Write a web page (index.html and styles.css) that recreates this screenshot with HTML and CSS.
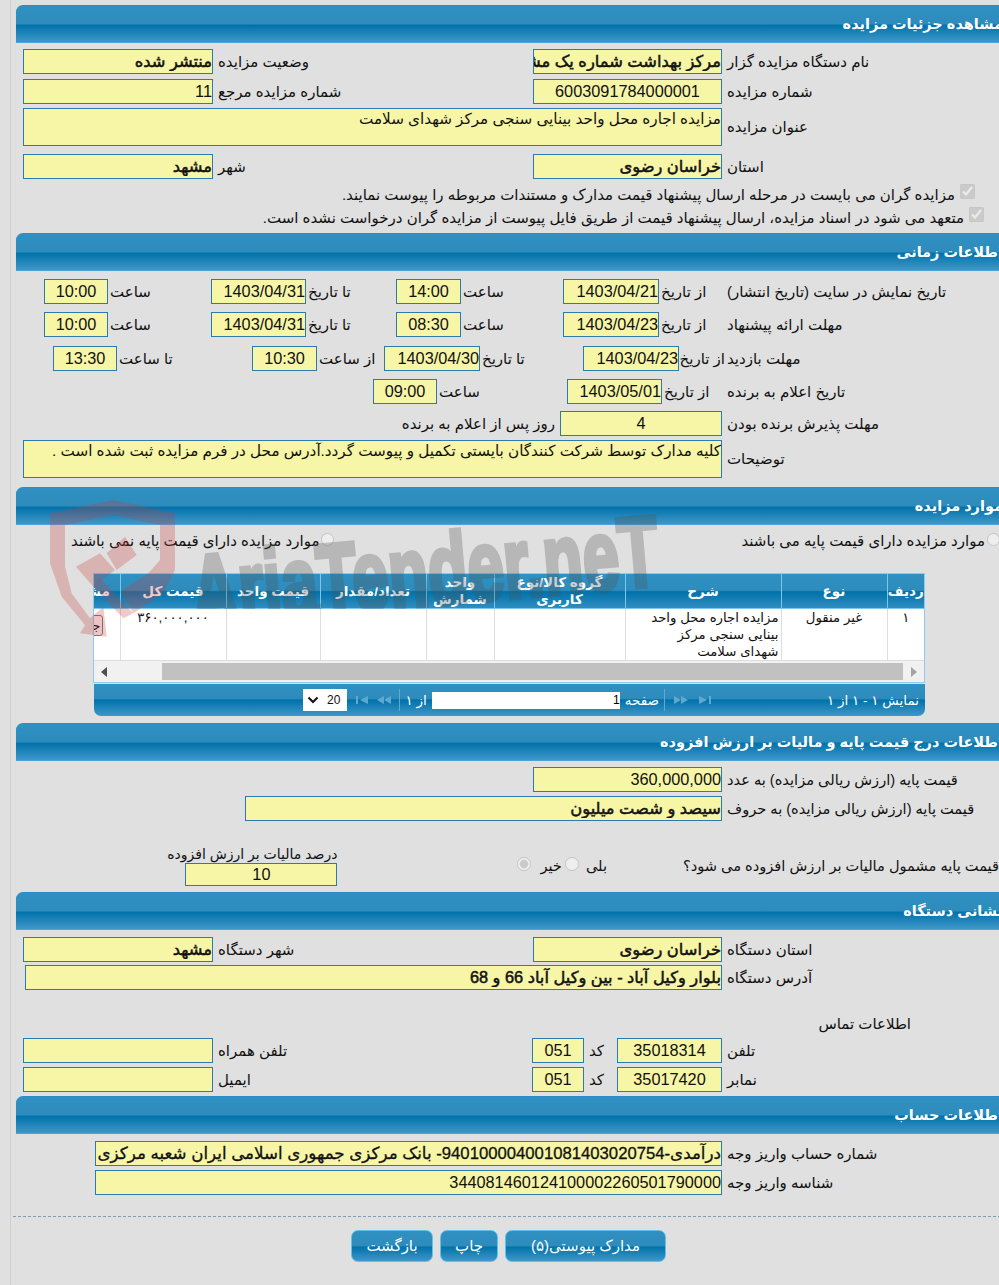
FILE: index.html
```html
<!DOCTYPE html>
<html lang="fa">
<head>
    <meta charset="UTF-8">
    <title>مشاهده جزئیات مزایده</title>
    <link rel="stylesheet" href="styles.css">
</head>
<body>
<div class="page">
    <section class="panel">
        <h2 class="panel-title">مشاهده جزئیات مزایده</h2>
        <div class="panel-body pt6 pb4">
            <div class="row form2">
                <label>نام دستگاه مزایده گزار</label>
                <input class="fld bold" readonly value="مرکز بهداشت شماره یک مشهد">
                <label>وضعیت مزایده</label>
                <input class="fld bold" readonly value="منتشر شده">
            </div>
            <div class="row form2 mt5">
                <label>شماره مزایده</label>
                <input class="fld center" readonly value="6003091784000001">
                <label>شماره مزایده مرجع</label>
                <input class="fld num" readonly value="11">
            </div>
            <div class="row area-row mt4">
                <label>عنوان مزایده</label>
                <div class="fld area">مزایده اجاره محل واحد بینایی سنجی مرکز شهدای سلامت</div>
            </div>
            <div class="row form2 mt8">
                <label>استان</label>
                <input class="fld bold" readonly value="خراسان رضوی">
                <label>شهر</label>
                <input class="fld bold" readonly value="مشهد">
            </div>
            <div class="check-row mt4 indent1">
                <input type="checkbox" checked disabled>
                <span>مزایده گران می بایست در مرحله ارسال پیشنهاد قیمت مدارک و مستندات مربوطه را پیوست نمایند.</span>
            </div>
            <div class="check-row indent2">
                <input type="checkbox" checked disabled>
                <span>متعهد می شود در اسناد مزایده، ارسال پیشنهاد قیمت از طریق فایل پیوست از مزایده گران درخواست نشده است.</span>
            </div>
        </div>
    </section>

    <section class="panel">
        <h2 class="panel-title">اطلاعات زمانی</h2>
        <div class="panel-body pt8 pb9">
            <div class="row time-a">
                <label>تاریخ نمایش در سایت (تاریخ انتشار)</label>
                <label>از تاریخ</label>
                <input class="fld num" readonly value="1403/04/21">
                <label>ساعت</label>
                <input class="fld center" readonly value="14:00">
                <label>تا تاریخ</label>
                <input class="fld num" readonly value="1403/04/31">
                <label>ساعت</label>
                <input class="fld center" readonly value="10:00">
            </div>
            <div class="row time-a mt8">
                <label>مهلت ارائه پیشنهاد</label>
                <label>از تاریخ</label>
                <input class="fld num" readonly value="1403/04/23">
                <label>ساعت</label>
                <input class="fld center" readonly value="08:30">
                <label>تا تاریخ</label>
                <input class="fld num" readonly value="1403/04/31">
                <label>ساعت</label>
                <input class="fld center" readonly value="10:00">
            </div>
            <div class="row time-b mt9">
                <label>مهلت بازدید</label>
                <label>از تاریخ</label>
                <input class="fld num" readonly value="1403/04/23">
                <label>تا تاریخ</label>
                <input class="fld num" readonly value="1403/04/30">
                <label>از ساعت</label>
                <input class="fld center" readonly value="10:30">
                <label>تا ساعت</label>
                <input class="fld center" readonly value="13:30">
            </div>
            <div class="row time-c mt8">
                <label>تاریخ اعلام به برنده</label>
                <label>از تاریخ</label>
                <input class="fld num" readonly value="1403/05/01">
                <label>ساعت</label>
                <input class="fld center" readonly value="09:00">
            </div>
            <div class="row time-d mt7">
                <label>مهلت پذیرش برنده بودن</label>
                <input class="fld center" readonly value="4">
                <label>روز پس از اعلام به برنده</label>
            </div>
            <div class="row area-row mt4">
                <label>توضیحات</label>
                <div class="fld area">کلیه مدارک توسط شرکت کنندگان بایستی تکمیل و پیوست گردد.آدرس محل در فرم مزایده ثبت شده است .</div>
            </div>
        </div>
    </section>

    <section class="panel">
        <h2 class="panel-title">موارد مزایده</h2>
        <div class="panel-body pt4 pb7">
            <div class="radio-row">
                <label class="radio-a"><input type="radio" disabled>موارد مزایده دارای قیمت پایه می باشند</label>
                <label class="radio-b"><input type="radio" disabled>موارد مزایده دارای قیمت پایه نمی باشند</label>
            </div>
            <div class="grid-wrap">
                <div class="grid-scroll">
                    <table class="grid">
                        <colgroup>
                            <col class="c-row"><col class="c-type"><col class="c-desc"><col class="c-group">
                            <col class="c-unit"><col class="c-qty"><col class="c-price"><col class="c-total"><col class="c-more">
                        </colgroup>
                        <thead>
                            <tr>
                                <th>ردیف</th>
                                <th>نوع</th>
                                <th>شرح</th>
                                <th>گروه کالا/نوع کاربری</th>
                                <th>واحد شمارش</th>
                                <th>تعداد/مقدار</th>
                                <th>قیمت واحد</th>
                                <th>قیمت کل</th>
                                <th class="more-head">مشاهده</th>
                            </tr>
                        </thead>
                        <tbody>
                            <tr>
                                <td class="mid">۱</td>
                                <td class="mid">غیر منقول</td>
                                <td class="desc">مزایده اجاره محل واحد بینایی سنجی مرکز شهدای سلامت</td>
                                <td></td>
                                <td></td>
                                <td></td>
                                <td></td>
                                <td class="mid">۳۶۰,۰۰۰,۰۰۰</td>
                                <td><button class="more-btn">جزئیات</button></td>
                            </tr>
                        </tbody>
                    </table>
                </div>
                <div class="hscroll">
                    <svg width="8" height="10" viewBox="0 0 8 10"><polygon points="7,0 7,10 1,5" fill="#505050"/></svg>
                    <div class="hscroll-thumb"></div>
                    <svg width="8" height="10" viewBox="0 0 8 10"><polygon points="1,0 1,10 7,5" fill="#a3a3a3"/></svg>
                </div>
            </div>
            <div class="pager">
                <span class="pager-info">نمایش ۱ - ۱ از ۱</span>
                <svg class="pager-icon last" width="13" height="8" viewBox="0 0 13 8"><polygon points="0,0 8,4 0,8"/><rect x="10" width="2" height="8"/></svg>
                <svg class="pager-icon next" width="15" height="8" viewBox="0 0 15 8"><polygon points="0,0 7,4 0,8"/><polygon points="7,0 14,4 7,8"/></svg>
                <span class="pager-sep first"></span>
                <span class="pager-text">صفحه</span>
                <input class="pager-input" readonly value="1">
                <span class="pager-text">از ۱</span>
                <span class="pager-sep second"></span>
                <svg class="pager-icon prev" width="15" height="8" viewBox="0 0 15 8"><polygon points="15,0 8,4 15,8"/><polygon points="8,0 1,4 8,8"/></svg>
                <svg class="pager-icon begin" width="13" height="8" viewBox="0 0 13 8"><polygon points="13,0 5,4 13,8"/><rect x="1" width="2" height="8"/></svg>
                <span class="pager-select">
                    <svg width="12" height="8" viewBox="0 0 12 8"><path d="M1.5 1.5 L6 6 L10.5 1.5" fill="none" stroke="#111" stroke-width="2"/></svg>
                    <span>20</span>
                </span>
            </div>
        </div>
    </section>

    <section class="panel price-panel">
        <h2 class="panel-title">اطلاعات درج قیمت پایه و مالیات بر ارزش افزوده</h2>
        <div class="panel-body pt6">
            <div class="row price-a">
                <label>قیمت پایه (ارزش ریالی مزایده) به عدد</label>
                <input class="fld num" readonly value="360,000,000">
            </div>
            <div class="row price-b mt4">
                <label>قیمت پایه (ارزش ریالی مزایده) به حروف</label>
                <input class="fld bold" readonly value="سیصد و شصت میلیون">
            </div>
            <div class="vat-row">
                <span class="vat-question">قیمت پایه مشمول مالیات بر ارزش افزوده می شود؟</span>
                <label class="vat-yes">بلی<input type="radio" disabled></label>
                <label class="vat-no">خیر<input type="radio" checked disabled></label>
                <div class="vat-percent">
                    <span>درصد مالیات بر ارزش افزوده</span>
                    <input class="fld center" readonly value="10">
                </div>
            </div>
        </div>
    </section>

    <section class="panel">
        <h2 class="panel-title">نشانی دستگاه</h2>
        <div class="panel-body pt7 pb4">
            <div class="row form2">
                <label>استان دستگاه</label>
                <input class="fld bold" readonly value="خراسان رضوی">
                <label>شهر دستگاه</label>
                <input class="fld bold" readonly value="مشهد">
            </div>
            <div class="row addr mt3">
                <label>آدرس دستگاه</label>
                <input class="fld bold" readonly value="بلوار وکیل آباد - بین وکیل آباد 66 و 68">
            </div>
            <div class="contact-head">اطلاعات تماس</div>
            <div class="row contact">
                <label>تلفن</label>
                <input class="fld center" readonly value="35018314">
                <label>کد</label>
                <input class="fld center" readonly value="051">
                <label>تلفن همراه</label>
                <input class="fld" readonly value="">
            </div>
            <div class="row contact mt4">
                <label>نمابر</label>
                <input class="fld center" readonly value="35017420">
                <label>کد</label>
                <input class="fld center" readonly value="051">
                <label>ایمیل</label>
                <input class="fld" readonly value="">
            </div>
        </div>
    </section>

    <section class="panel">
        <h2 class="panel-title">اطلاعات حساب</h2>
        <div class="panel-body pt7">
            <div class="row account">
                <label>شماره حساب واریز وجه</label>
                <input class="fld medium" readonly value="درآمدی-940100004001081403020754- بانک مرکزی جمهوری اسلامی ایران شعبه مرکزی">
            </div>
            <div class="row account mt4">
                <label>شناسه واریز وجه</label>
                <input class="fld num" readonly value="344081460124100002260501790000">
            </div>
        </div>
    </section>

    <div class="actions">
        <button class="action-btn btn-docs">مدارک پیوستی(۵)</button>
        <button class="action-btn btn-print">چاپ</button>
        <button class="action-btn btn-back">بازگشت</button>
    </div>

    <!-- watermark over the page -->
    <svg class="mark-shield" width="340" height="170" viewBox="0 0 1020 510">
        <path d="M150 70 L340 30 L525 70 L525 240 L490 310 L400 370 L360 305 L445 250 L480 210 L480 105 L340 75 L195 105 L195 230 L215 310 L270 385 L310 350 L320 440 L240 430 L255 405 L185 320 L150 220 Z" fill="#c83c3c" opacity="0.28"/>
        <polygon points="228,230 300,190 345,240 280,290" fill="#c83c3c" opacity="0.28"/>
        <polygon points="320,190 375,140 410,195 350,240" fill="#c83c3c" opacity="0.28"/>
        <polygon points="280,290 300,265 400,370 370,385" fill="#c83c3c" opacity="0.28"/>
    </svg>
    <div class="mark-clip"><span class="mark-text">AriaTender.neT</span></div>
</div>
</body>
</html>
```

FILE: styles.css
```css
* {
    box-sizing: border-box;
}
html, body {
    margin: 0;
    height: 1285px;
    overflow: hidden;
}
body {
    background-color: #e0e0e0;
    font-family: "Liberation Sans", "DejaVu Sans", sans-serif;
    font-size: 15px;
    color: #111;
}
.page {
    position: relative;
    width: 1006px;
    height: 1285px;
    margin-left: 10px;
    padding: 5px 0 0 5px;
    border-left: 1px solid #cfcfcf;
    direction: rtl;
}

/* section headers */
.panel-title {
    height: 38px;
    margin: 0;
    padding: 8px 13px 0 0;
    font-size: 14.5px;
    line-height: 20px;
    font-weight: bold;
    color: #fff;
    border-top: 1px solid #2a8cc9;
    border-bottom: 1px solid #4aa3dc;
    border-top-left-radius: 7px;
    background: linear-gradient(#2f90c1 0, #2e8cbc 50%, #0072aa 53%, #3f97c9 100%);
}
.pt4 { padding-top: 4px; }
.pt6 { padding-top: 6px; }
.pt7 { padding-top: 7px; }
.pt8 { padding-top: 8px; }
.pb4 { padding-bottom: 4px; }
.pb7 { padding-bottom: 7px; }
.pb9 { padding-bottom: 9px; }
.mt3 { margin-top: 3px; }
.mt4 { margin-top: 4px; }
.mt5 { margin-top: 5px; }
.mt7 { margin-top: 7px; }
.mt8 { margin-top: 8px; }
.mt9 { margin-top: 9px; }

/* form rows, columns run from the right */
.row {
    display: grid;
    align-items: center;
    height: 25px;
    column-gap: 5px;
}
.row label {
    text-align: left;
    white-space: nowrap;
}
.form2 { grid-template-columns: 289px 189px 310px 190px; }
.area-row { grid-template-columns: 289px 699px; height: 38px; }
.time-a { grid-template-columns: 289px 64px 96px 98px 65px 86px 95px 99px 64px; column-gap: 2px; }
.time-b { grid-template-columns: 289px 44px 96px 99px 96px 63px 65px 131px 64px; column-gap: 2px; }
.time-c { grid-template-columns: 289px 61px 95px 126px 64px; column-gap: 2px; }
.time-d { grid-template-columns: 289px 162px 152px; column-gap: 5px; }
.price-a { grid-template-columns: 289px 189px; }
.price-b { grid-template-columns: 289px 477px; }
.addr { grid-template-columns: 289px 697px; }
.account { grid-template-columns: 289px 627px; }
.contact { grid-template-columns: 289px 105px 23px 52px 309px 190px; }

.fld {
    display: block;
    width: 100%;
    height: 100%;
    margin: 0;
    padding: 0;
    border: 1px solid #2b7bae;
    border-radius: 0;
    outline: none;
    background-color: #f7f5a6;
    font-family: inherit;
    font-size: 16.3px;
    color: #111;
    direction: rtl;
}
.bold { font-size: 16.3px; -webkit-text-stroke: 0.5px #111; }
.medium { font-size: 16.7px; -webkit-text-stroke: 0.3px #111; }
.center { text-align: center; direction: ltr; }
.num { text-align: right; direction: ltr; }
.area {
    font-size: 15.2px;
    line-height: 20px;
}

.check-row {
    display: flex;
    align-items: center;
    height: 23px;
    white-space: nowrap;
}
.check-row input {
    width: 15px;
    height: 15px;
    margin: 0 0 6px 5px;
}
.indent1 { padding-right: 41px; }
.indent2 { padding-right: 32px; }

/* items table */
.radio-row {
    display: flex;
    height: 24px;
    line-height: 24px;
    white-space: nowrap;
}
.radio-row input {
    margin: 0 0 0 2px;
}
.radio-a { margin-right: 16px; }
.radio-b { margin-right: 407px; }
.grid-wrap {
    width: 832px;
    margin: 20px 91px 0 0;
    border: 1px solid #8ccbea;
    background-color: #f1f1f1;
}
.grid-scroll {
    overflow: hidden;
}
.grid {
    width: 876px;
    table-layout: fixed;
    border-collapse: collapse;
}
.c-row { width: 37px; }
.c-type { width: 106px; }
.c-desc { width: 156px; }
.c-group { width: 131px; }
.c-unit { width: 68px; }
.c-qty { width: 106px; }
.c-price { width: 94px; }
.c-total { width: 106px; }
.c-more { width: 72px; }
.grid th {
    height: 34px;
    padding: 0;
    font-size: 13.5px;
    line-height: 17px;
    font-weight: bold;
    color: #fff;
    border-left: 1px solid #7cc6ec;
    border-bottom: 1px solid #7cc6ec;
    background: linear-gradient(#2f90c1 0, #2e8cbc 48%, #0072aa 52%, #2f8dc0 100%);
}
.grid th:last-child { border-left: 0; }
.grid td {
    height: 50px;
    padding: 0 2px 0;
    vertical-align: top;
    font-size: 13.3px;
    line-height: 17px;
    background-color: #fff;
    border-left: 1px solid #ddd;
    border-bottom: 1px solid #ddd;
}
.grid td.mid { text-align: center; }
.grid td.desc { padding-left: 22px; }
.more-btn {
    display: block;
    width: 60px;
    height: 21px;
    margin: 6px 15px 0 0;
    padding: 0 1px 0 0;
    overflow: hidden;
    text-align: right;
    direction: rtl;
    border: 1px solid #777;
    border-radius: 3px;
    background-color: #f8f8f8;
    font-family: inherit;
    font-size: 13px;
}
.hscroll {
    display: flex;
    align-items: center;
    height: 21px;
    direction: ltr;
    padding: 0 5px 0 6px;
    background-color: #f1f1f1;
}
.hscroll-thumb {
    width: 741px;
    height: 17px;
    margin: 0 7px 0 54px;
    background-color: #c1c1c1;
}
.pager {
    display: flex;
    align-items: center;
    width: 831px;
    height: 32px;
    margin: 1px 91px 0 0;
    padding-right: 6px;
    color: #fff;
    font-size: 13.5px;
    border-radius: 0 0 7px 7px;
    background: linear-gradient(#2f90c1 0, #2e8cbc 45%, #0072aa 50%, #3f97c9 100%);
}
.pager-info { width: 100px; white-space: nowrap; }
.pager-icon { fill: #5fa9cf; flex: none; }
.pager-icon.last { margin-right: 107px; }
.pager-icon.next { margin-right: 10px; }
.pager-sep {
    width: 1px;
    height: 22px;
    background-color: #5fa9cf;
}
.pager-sep.first { margin-right: 9px; }
.pager-text { margin: 0 5px; white-space: nowrap; }
.pager-input {
    width: 188px;
    height: 17px;
    padding: 0;
    border: 0;
    outline: none;
    background-color: #fff;
    direction: rtl;
    font-family: inherit;
    font-size: 12px;
}
.pager-sep.second { margin-right: 0; }
.pager-icon.prev { margin-right: 8px; }
.pager-icon.begin { margin-right: 8px; }
.pager-select {
    display: flex;
    align-items: center;
    justify-content: space-between;
    width: 44px;
    height: 22px;
    margin-right: 8px;
    padding: 0 7px 0 4px;
    direction: ltr;
    background-color: #fff;
    color: #111;
    font-size: 12px;
}

/* vat row */
.price-panel { font-size: 14.6px; }
.vat-row {
    display: flex;
    align-items: flex-end;
    height: 41px;
    margin-top: 24px;
    margin-bottom: 6px;
    white-space: nowrap;
}
.vat-question { margin-right: 17px; margin-bottom: 12px; }
.vat-yes, .vat-no { display: flex; align-items: center; margin-bottom: 12px; }
.vat-yes { margin-right: 76px; }
.vat-yes input, .vat-no input { width: 14px; height: 14px; margin: 0 3px 3px 3px; }
.vat-yes input { margin-right: 7px; }
.vat-no input { margin-right: 9px; }
.vat-percent {
    display: flex;
    flex-direction: column;
    width: 168px;
    margin-right: 177px;
}
.vat-percent span { height: 18px; line-height: 18px; font-size: 14px; }
.vat-percent input { width: 152px; height: 23px; }

.contact-head {
    height: 18px;
    margin: 25px 105px 5px 0;
    line-height: 18px;
}

.actions {
    display: flex;
    gap: 7px;
    width: 1003px;
    margin: 21px 0 0 -3px;
    padding: 13px 350px 0 0;
    border-top: 1px dashed #7d9fb3;
}
.action-btn {
    height: 32px;
    padding: 0;
    border: 1px solid #62c0ea;
    border-radius: 7px;
    color: #fff;
    font-family: inherit;
    font-size: 15px;
    background: linear-gradient(#2f90c1 0, #2e8cbc 50%, #0072aa 53%, #3f97c9 100%);
}
.btn-docs { width: 161px; }
.btn-print { width: 58px; }
.btn-back { width: 82px; }

/* watermark */
.mark-shield {
    position: absolute;
    left: -11px;
    top: 490px;
    pointer-events: none;
}
.mark-clip {
    position: absolute;
    left: 170px;
    top: 505px;
    width: 500px;
    height: 104px;
    overflow: hidden;
    direction: ltr;
    opacity: 0.28;
    pointer-events: none;
}
.mark-text {
    position: absolute;
    left: 6px;
    top: 36px;
    font-size: 100px;
    line-height: 100px;
    font-weight: bold;
    white-space: nowrap;
    color: #505050;
    -webkit-text-stroke: 5px #505050;
    transform-origin: left top;
    transform: rotate(-5deg) scaleX(0.65);
}
```
